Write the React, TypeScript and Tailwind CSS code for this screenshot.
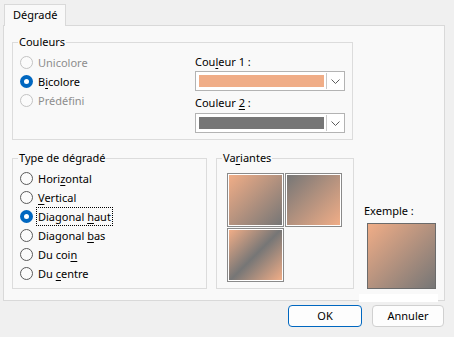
import { ReactNode } from "react";

const PEACH = "#f0ad87";
const GRAY = "#767676";

function Mn({ children }: { children: ReactNode }) {
  return <span className="underline underline-offset-2 decoration-1">{children}</span>;
}

function Radio({
  checked,
  disabled,
  focus,
  children,
}: {
  checked?: boolean;
  disabled?: boolean;
  focus?: boolean;
  children: ReactNode;
}) {
  return (
    <div className="flex h-[19px] items-center">
      {checked ? (
        <span className="flex h-[13px] w-[13px] items-center justify-center rounded-full bg-[#0067c0]">
          <span className="h-[5px] w-[5px] rounded-full bg-white" />
        </span>
      ) : (
        <span
          className={
            "h-[13px] w-[13px] rounded-full border bg-[#fbfbfb] " +
            (disabled ? "border-[#c3c3c3]" : "border-[#5a5a5a]")
          }
        />
      )}
      <span
        className={
          "ml-[3px] px-px leading-[17px] " +
          (disabled ? "text-[#8d8d8d] " : "text-black ") +
          (focus ? "border border-dotted border-black" : "border border-transparent")
        }
      >
        {children}
      </span>
    </div>
  );
}

function Combo({ color }: { color: string }) {
  return (
    <div className="flex h-[20px] w-[150px] border border-[#b3b3b3] bg-white">
      <div className="flex flex-1 items-center pl-[3px] pr-[2px]">
        <div className="h-[12px] w-full" style={{ background: color }} />
      </div>
      <div className="my-px mr-px flex w-[17px] items-center justify-center border-l border-[#c9c9c9] bg-white">
        <svg width="9" height="5" viewBox="0 0 9 5" fill="none">
          <path d="M0.5 0.5 L4.5 4.5 L8.5 0.5" stroke="#5c5c5c" strokeWidth="1" />
        </svg>
      </div>
    </div>
  );
}

function Swatch({ bg }: { bg: string }) {
  return (
    <div className="h-[54px] w-[57px] border border-[#8a8a8a] bg-white p-px">
      <div className="h-full w-full" style={{ background: bg }} />
    </div>
  );
}

export default function App() {
  const diag = `linear-gradient(135deg, ${PEACH} 0%, ${GRAY} 100%)`;
  const diagRev = `linear-gradient(135deg, ${GRAY} 0%, ${PEACH} 100%)`;
  const diagMid = `linear-gradient(135deg, ${PEACH} 0%, ${GRAY} 50%, ${PEACH} 100%)`;

  return (
    <div
      className="h-[337px] w-[454px] overflow-hidden bg-[#f0f0f0] pl-[3px] pt-[4px] text-[11px] text-black"
      style={{ fontFamily: '"Noto Sans", "Open Sans", sans-serif' }}
    >
      {/* onglet */}
      <div className="relative z-10 -mb-px ml-px flex h-[22px] w-[62px] items-center border border-b-0 border-[#d9d9d9] bg-[#f9f9f9] pl-[8px]">
        Dégradé
      </div>

      {/* panneau */}
      <div className="h-[276px] w-[442px] border border-[#d9d9d9] bg-[#f9f9f9]">
        <fieldset className="ml-[8px] mt-[8px] h-[106px] w-[341px] border border-[#dcdcdc]">
          <legend className="ml-[5px] px-px leading-[16px]">Couleurs</legend>
          <div className="flex pl-[7px]">
            <div className="mt-[3px] w-[175px]">
              <Radio disabled>Unicolore</Radio>
              <Radio checked>
                B<Mn>i</Mn>colore
              </Radio>
              <Radio disabled>Prédéfini</Radio>
            </div>
            <div className="flex flex-col">
              <div className="mt-[4px] leading-[16px]">
                Cou<Mn>l</Mn>eur 1 :
              </div>
              <div className="mt-[1px]">
                <Combo color={PEACH} />
              </div>
              <div className="mt-[4px] leading-[16px]">
                Couleur <Mn>2</Mn> :
              </div>
              <div className="mt-[2px]">
                <Combo color={GRAY} />
              </div>
            </div>
          </div>
        </fieldset>

        <div className="mt-[10px] flex">
          <fieldset className="ml-[8px] h-[139px] w-[195px] border border-[#dcdcdc]">
            <legend className="ml-[5px] px-px leading-[16px]">Type de dégradé</legend>
            <div className="mt-[3px] pl-[7px]">
              <Radio>
                Hori<Mn>z</Mn>ontal
              </Radio>
              <Radio>
                <Mn>V</Mn>ertical
              </Radio>
              <Radio checked focus>
                Diagonal <Mn>h</Mn>aut
              </Radio>
              <Radio>
                Diagonal <Mn>b</Mn>as
              </Radio>
              <Radio>
                Du coi<Mn>n</Mn>
              </Radio>
              <Radio>
                Du <Mn>c</Mn>entre
              </Radio>
            </div>
          </fieldset>

          <fieldset className="ml-[9px] h-[139px] w-[138px] border border-[#dcdcdc]">
            <legend className="ml-[5px] px-px leading-[16px]">
              Va<Mn>r</Mn>iantes
            </legend>
            <div className="ml-[10px] mt-[7px] grid w-[115px] grid-cols-2 gap-x-px gap-y-[1px]">
              <Swatch bg={diag} />
              <Swatch bg={diagRev} />
              <Swatch bg={diagMid} />
            </div>
          </fieldset>

          <div className="ml-[9px] flex flex-col">
            <div className="ml-[1px] mt-[53px] leading-[16px]">Exemple :</div>
            <div className="ml-[4px] mt-[4px] h-[66px] w-[69px] border border-[#6b6b6b]" style={{ background: diag }} />
            <div className="ml-[-4px] mt-[5px] h-[8px] w-[79px] bg-white" />
          </div>
        </div>
      </div>

      {/* boutons */}
      <div className="mt-[4px] flex w-[441px] justify-end gap-[10px]">
        <button className="h-[22px] w-[74px] rounded-[4px] border border-[#0067c0] bg-[#fdfdfd] text-[11px]">
          OK
        </button>
        <button className="h-[22px] w-[72px] rounded-[4px] border border-[#d0d0d0] bg-[#fdfdfd] text-[11px]">
          Annuler
        </button>
      </div>
    </div>
  );
}
